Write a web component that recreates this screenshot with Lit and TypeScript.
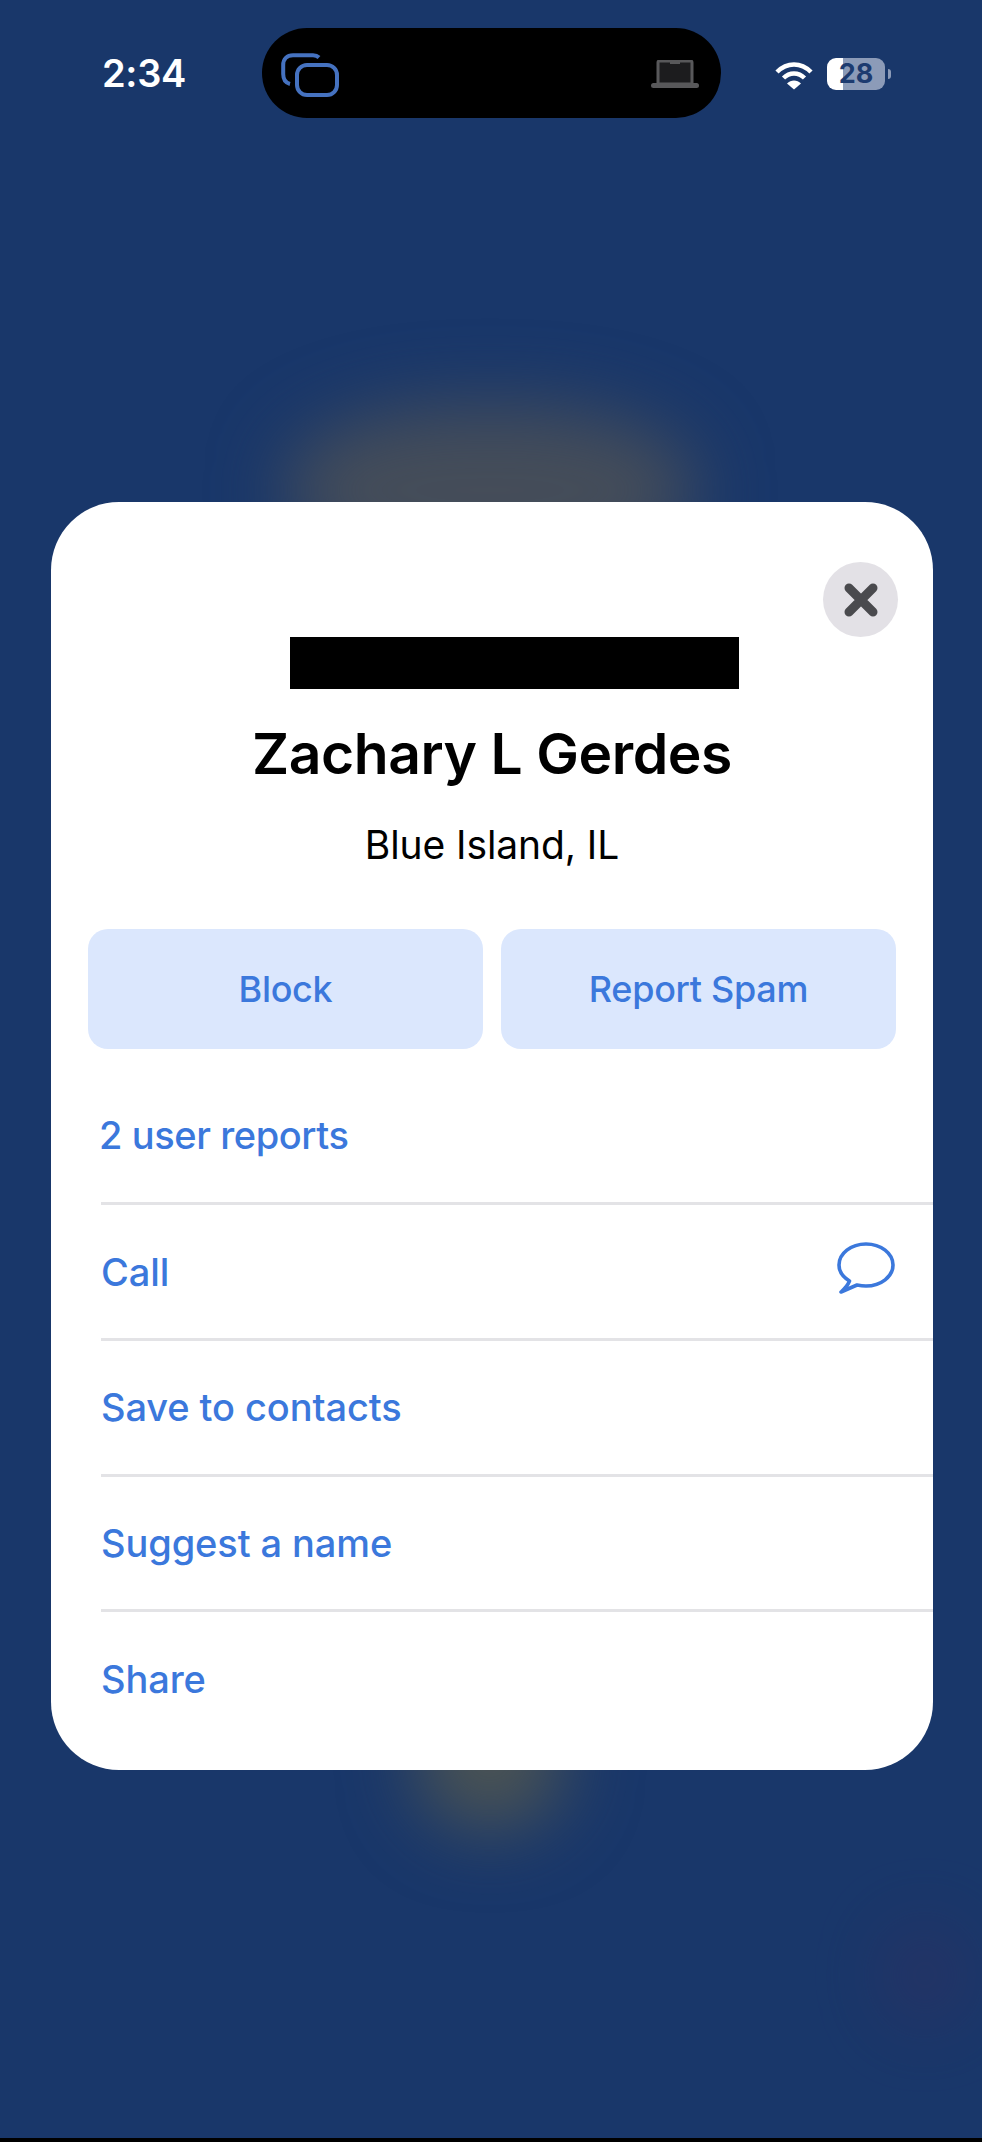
import { LitElement, html, css } from "lit";
import { customElement } from "lit/decorators.js";

const rows = ["Call", "Save to contacts", "Suggest a name", "Share"];

@customElement("app-root")
export class AppRoot extends LitElement {
  static styles = css`
    :host { display: block; width: 982px; height: 2142px; font-family: Inter, "Liberation Sans", sans-serif; }
    .page { position: relative; width: 982px; height: 2142px; overflow: hidden; background: #19376a; box-sizing: border-box; padding-top: 28px; }
    .glow { position: absolute; border-radius: 50%; filter: blur(36px); }
    .g1 { left: 285px; top: 405px; width: 410px; height: 170px; border-radius: 45%; background: #454d59; }
    .g2 { left: 415px; top: 1690px; width: 150px; height: 140px; background: #4c5453; }
    .g3 { left: 885px; top: 1925px; width: 80px; height: 100px; background: #3a2c5c; opacity: .45; }
    .bottom { position: absolute; left: 0; right: 0; bottom: 0; height: 4px; background: #000; }
    .status { position: relative; display: grid; grid-template-columns: 262px 459px 1fr; height: 90px; color: #fff; }
    .time { font-size: 38px; font-weight: 600; letter-spacing: -.3px; text-align: center; padding: 23px 0 0 38px; box-sizing: border-box; line-height: 44px; width: 250px; }
    .island { position: relative; background: #000; border-radius: 45px; display: flex; justify-content: space-between; padding: 25px 22px 0 19px; box-sizing: border-box; }
    .island svg { display: block; }
    .right { display: flex; align-items: flex-start; padding: 30px 0 0 54px; gap: 14px; }
    .batt { position: relative; width: 58px; height: 32px; border-radius: 9px; background: linear-gradient(90deg, #fff 16px, #8c9bb8 16px); color: #1d3b70; font-size: 27px; font-weight: 700; text-align: center; line-height: 32px; }
    .batt::after { content: ""; position: absolute; left: 61px; top: 11px; width: 3px; height: 10px; background: #8c9bb8; border-radius: 0 3px 3px 0; }
    .card { position: relative; margin: 384px 49px 0 51px; height: 1268px; background: #fff; border-radius: 68px; box-sizing: border-box; padding: 135px 0 0 0; }
    .close { position: absolute; left: 772px; top: 60px; width: 75px; height: 75px; border-radius: 50%; background: #e3e1e6; display: flex; align-items: center; justify-content: center; }
    .redact { width: 449px; height: 52px; margin-left: 239px; background: #000; }
    h1 { margin: 30px 0 0; font-size: 57px; line-height: 70px; font-weight: 600; color: #000; text-align: center; letter-spacing: -.45px; }
    .loc { margin-top: 32px; font-size: 39px; line-height: 48px; color: #000; text-align: center; letter-spacing: -.1px; }
    .btns { display: grid; grid-template-columns: 395px 395px; gap: 18px; padding: 0 0 0 37px; margin-top: 60px; }
    .btn { height: 120px; border-radius: 20px; background: #dbe7fd; color: #3b78dc; font-size: 36px; font-weight: 550; letter-spacing: -.3px; display: flex; align-items: center; justify-content: center; }
    .list { margin-top: 19px; }
    .row { height: 135.7px; box-sizing: border-box; margin-left: 50px; border-top: 3px solid #e3e3e6; display: flex; align-items: center; justify-content: space-between; color: #3b78dc; font-size: 38px; font-weight: 550; letter-spacing: -.1px; padding-right: 36px; }
    .row.first { border-top: 0; margin-left: 48px; height: 134.2px; letter-spacing: -.4px; }
    .row svg { display: block; margin-top: -6px; }
  `;

  render() {
    return html`
      <div class="page">
        <div class="glow g1"></div>
        <div class="glow g2"></div>
        <div class="glow g3"></div>
        <div class="status">
          <div class="time">2:34</div>
          <div class="island">
            <svg width="58" height="45" viewBox="0 0 58 45" fill="none" stroke="#4572c0" stroke-width="4">
              <path d="M38 4.5C36.5 3 35 2.200 32 2.200H12C6 2.200 2.200 6 2.200 12V21C2.200 27 5 30 9 31"/>
              <rect x="16" y="12" width="40" height="30" rx="10"/>
            </svg>
            <svg width="48" height="30" viewBox="0 0 48 30" style="margin-top:7px">
              <path d="M7 2.500a1.500 1.500 0 0 1 1.500-1.500h31a1.500 1.500 0 0 1 1.500 1.500V24H7Z" fill="#1c1c1e" stroke="#58585a" stroke-width="3"/>
              <rect x="19" y="1" width="10" height="3" fill="#58585a"/>
              <rect x="0" y="23" width="48" height="5" rx="2.500" fill="#58585a"/>
            </svg>
          </div>
          <div class="right">
            <svg width="38" height="28" viewBox="0 0 38 28" fill="none" stroke="#fff" stroke-width="4.500" style="margin-top:4px">
              <path d="M2 10C12 0 26 0 36 10"/>
              <path d="M8.500 16C14.500 10 23.500 10 29.500 16"/>
              <path d="M19 27.500L12 21.500C16 17.500 22 17.500 26 21.500Z" fill="#fff" stroke="none"/>
            </svg>
            <div class="batt">28</div>
          </div>
        </div>
        <div class="card">
          <div class="close">
            <svg width="34" height="34" viewBox="0 0 34 34" stroke="#4a4a4e" stroke-width="9" stroke-linecap="round">
              <path d="M5 5L29 29M29 5L5 29"/>
            </svg>
          </div>
          <div class="redact"></div>
          <h1>Zachary L Gerdes</h1>
          <div class="loc">Blue Island, IL</div>
          <div class="btns">
            <div class="btn">Block</div>
            <div class="btn">Report Spam</div>
          </div>
          <div class="list">
            <div class="row first">2 user reports</div>
            ${rows.map(
              (r) => html`<div class="row">
                <span>${r}</span>
                ${r === "Call"
                  ? html`<svg width="60" height="54" viewBox="0 0 60 54" fill="none" stroke="#3b78dc" stroke-width="3.600" stroke-linejoin="round">
                      <path d="M12.500 39C6 35 2 29.500 2 23C2 11.500 14 2 29 2C44 2 56 11.500 56 23C56 34.500 44 44 29 44C26 44 23 43.600 20 43L4 50C7.500 47 10.500 44 12.500 39Z"/>
                    </svg>`
                  : ""}
              </div>`
            )}
          </div>
        </div>
        <div class="bottom"></div>
      </div>
    `;
  }
}
